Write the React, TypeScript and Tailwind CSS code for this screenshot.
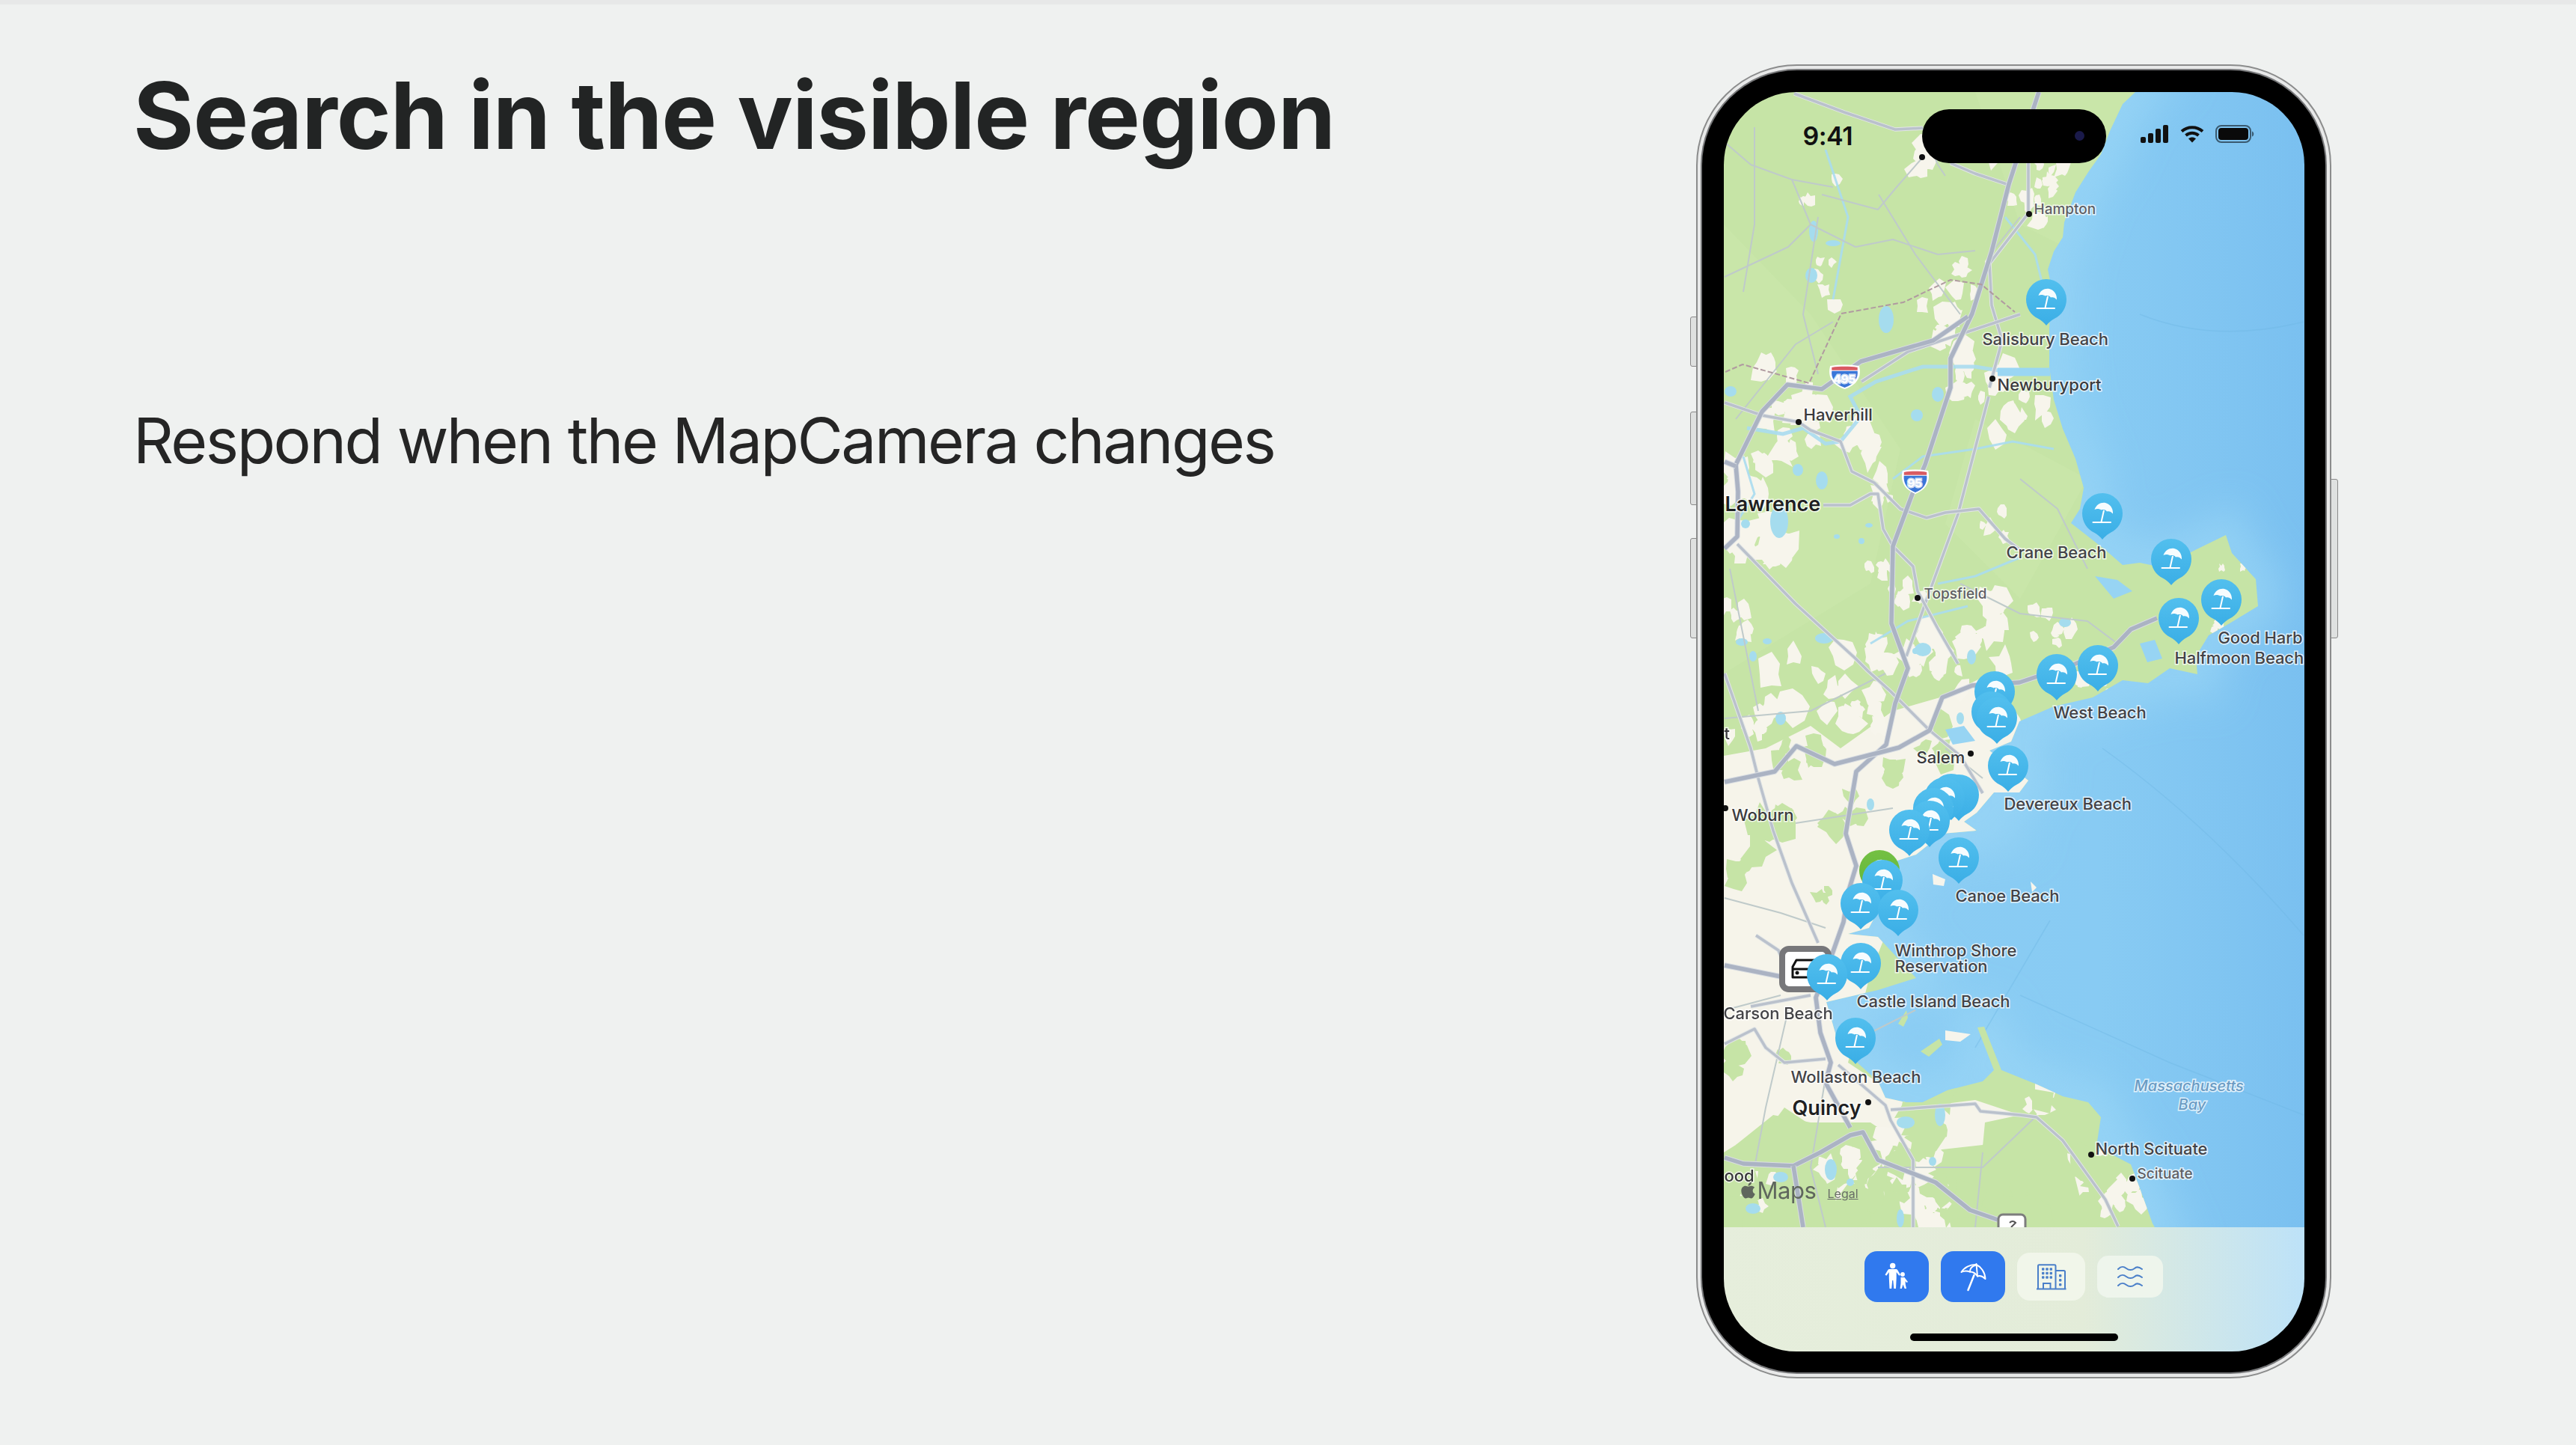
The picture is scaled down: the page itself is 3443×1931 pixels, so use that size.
import React from "react";
import { FaApple } from "react-icons/fa";

function rngFrom(seed: number) {
  let a = seed;
  return () => {
    a |= 0; a = (a + 0x6d2b79f5) | 0;
    let t = Math.imul(a ^ (a >>> 15), 1 | a);
    t = (t + Math.imul(t ^ (t >>> 7), 61 | t)) ^ t;
    return ((t ^ (t >>> 14)) >>> 0) / 4294967296;
  };
}

function blobs(clusters: number[][], seed: number) {
  const r = rngFrom(seed);
  let d = "";
  for (const [cx, cy, spread, count, size] of clusters) {
    for (let i = 0; i < count; i++) {
      const x = cx + (r() - 0.5) * 2 * spread;
      const y = cy + (r() - 0.5) * 2 * spread;
      const rad = size * (0.35 + r() * 0.5);
      const n = 7 + Math.floor(r() * 5);
      for (let k = 0; k < n; k++) {
        const an = (k / n) * Math.PI * 2;
        const rr = rad * (0.45 + r() * 0.75);
        d += `${k === 0 ? "M" : "L"}${(x + Math.cos(an) * rr).toFixed(0)} ${(y + Math.sin(an) * rr * 1.2).toFixed(0)}`;
      }
      d += "Z";
    }
  }
  return d;
}

const LAND =
  "M2854 123L2837 139L2820 175L2808 206L2791 230L2774 257L2759 297L2757 317L2745 336L2737 360L2742 384L2739 439L2739 490L2745 534L2757 573L2774 613L2785 652L2780 680L2768 699L2814 735L2837 755L2860 752L2889 758L2934 735L2975 715L2983 739L3015 774L3018 810L2980 833L2952 849L2935 877L2937 901L2900 893L2871 913L2837 909L2797 932L2745 944L2699 964L2688 991L2659 1003L2711 1043L2699 1059L2665 1059L2642 1086L2625 1098L2642 1110L2596 1114L2561 1142L2527 1153L2527 1185L2498 1240L2470 1248L2510 1252L2561 1307L2510 1323L2441 1339L2450 1370L2458 1398L2510 1445L2520 1467L2547 1473L2570 1473L2603 1457L2650 1445L2665 1430L2643 1373L2652 1372L2675 1430L2722 1449L2757 1465L2791 1473L2808 1493L2802 1532L2848 1556L2860 1588L2877 1635L2880 1640L2304 1640L2304 123Z";

const cream = blobs(
  [
    [2569, 205, 30, 6, 22], [2690, 200, 40, 10, 20], [2745, 230, 25, 8, 16], [2710, 290, 25, 6, 16],
    [2430, 260, 30, 3, 14], [2420, 370, 40, 5, 18], [2600, 420, 40, 10, 20], [2640, 370, 25, 5, 15],
    [2380, 510, 40, 8, 26], [2650, 500, 35, 12, 22], [2705, 560, 35, 7, 20], [2400, 570, 40, 9, 24],
    [2480, 590, 22, 6, 24], [2335, 640, 28, 9, 26], [2350, 730, 38, 10, 30], [2510, 650, 18, 5, 15],
    [2510, 760, 15, 5, 15], [2545, 795, 25, 6, 15], [2660, 825, 22, 5, 26], [2320, 830, 25, 6, 18],
    [2530, 870, 30, 7, 20], [2590, 880, 40, 10, 24], [2650, 860, 28, 5, 24], [2720, 835, 25, 4, 15],
    [2760, 850, 15, 4, 15], [2800, 915, 25, 7, 15], [2420, 930, 60, 10, 26], [2340, 960, 30, 7, 22],
    [2490, 950, 30, 7, 20], [2660, 700, 20, 4, 14], [2980, 770, 22, 4, 14], [2960, 838, 20, 4, 14],
    [2480, 1560, 45, 14, 24], [2570, 1590, 55, 14, 24], [2800, 1570, 30, 7, 18], [2720, 1470, 20, 5, 16],
    [2350, 1600, 30, 6, 18], [2835, 1600, 22, 7, 24],
  ],
  11,
);
const green = blobs(
  [
    [2370, 1115, 22, 5, 30], [2465, 1085, 22, 5, 28], [2330, 1160, 20, 4, 24], [2400, 1020, 30, 5, 26],
    [2530, 1040, 20, 4, 22], [2590, 990, 22, 4, 24], [2330, 1420, 20, 3, 28], [2380, 1400, 12, 2, 16],
    [2560, 1490, 40, 8, 30], [2500, 1590, 40, 9, 30], [2600, 1600, 30, 6, 30], [2340, 1610, 28, 6, 28],
    [2790, 1560, 20, 5, 30], [2430, 1200, 20, 3, 16], [2580, 1530, 20, 4, 24], [2700, 1610, 35, 7, 30],
  ],
  23,
);

const PONDS = [
  [2378, 697, 12, 22], [2435, 642, 8, 12], [2403, 628, 7, 8], [2562, 555, 8, 8], [2570, 868, 11, 9], [2635, 878, 6, 10],
  [2328, 858, 8, 5], [2438, 853, 12, 7], [2362, 857, 6, 4], [2343, 877, 5, 7], [2455, 717, 4, 3], [2488, 723, 4, 4],
  [2498, 702, 5, 3], [2313, 523, 8, 7], [2590, 527, 8, 10], [2424, 309, 6, 14], [2450, 325, 10, 4], [2421, 368, 8, 10],
  [2521, 427, 10, 18], [2380, 1573, 10, 7], [2447, 1563, 8, 14], [2473, 1580, 5, 5], [2343, 1615, 10, 7], [2583, 1552, 5, 6],
  [2540, 1628, 5, 12], [2593, 1490, 7, 15], [2547, 1500, 12, 8], [2760, 832, 8, 6], [2500, 1075, 5, 8], [2380, 960, 7, 9],
  [2333, 700, 6, 6], [2560, 870, 4, 4], [2645, 955, 6, 5], [2620, 960, 5, 8], [2565, 1180, 4, 4],
];

const MAJOR = [
  "M2725 123L2685 246L2662 336L2636 419L2607 479L2607 518L2573 621L2556 660L2530 730L2528 833L2550 893L2533 940L2521 995L2481 1031L2467 1114L2481 1157L2470 1193L2464 1232L2440 1300L2427 1333L2433 1380L2447 1420L2440 1447L2473 1507",
  "M2630 423L2584 455L2487 483L2435 520L2389 514L2355 550L2320 621L2323 657L2322 717L2305 733",
  "M2305 617L2320 623",
  "M2883 826L2848 841L2825 865L2774 887L2699 912L2636 916L2596 932L2579 976L2538 999L2452 1021L2401 997L2372 1031L2305 1045",
  "M2305 1547L2330 1555L2397 1558L2433 1540L2473 1517L2490 1513L2510 1550L2587 1580L2633 1617L2670 1630",
  "M2397 1558L2410 1640",
  "M2305 1290L2380 1305L2430 1310",
];
const MID = [
  "M2398 125L2465 150L2533 173L2570 171",
  "M2607 218L2640 232L2682 246",
  "M2322 727L2400 807L2480 880L2497 897L2527 924L2579 976",
  "M2658 530L2617 687L2573 807L2548 877",
  "M2659 518L2676 455L2662 408L2659 352L2711 285L2711 218L2725 175",
  "M2488 510L2550 470L2640 440L2700 420",
  "M2305 538L2355 555L2404 564L2420 575L2460 590L2475 630L2505 645L2520 660L2540 680L2575 692L2600 685L2645 680L2680 720L2700 735",
  "M2437 675L2473 675L2500 660L2510 660L2517 707L2530 730L2557 757L2563 790L2590 840L2617 887",
  "M2457 1423L2520 1477L2527 1497L2557 1550L2557 1640",
  "M2527 1483L2640 1475L2647 1485L2700 1490L2722 1493L2757 1524L2814 1603L2831 1639",
  "M2305 1395L2345 1375L2360 1400L2385 1420L2440 1415",
  "M2347 1250L2377 1270L2390 1300",
  "M2305 900L2340 1000L2350 1040L2370 1110L2395 1180L2430 1260",
  "M2420 1330L2340 1345",
  "M2579 976L2620 1010L2650 1060",
];
const MINOR = [
  "M2570 171L2590 220L2600 235",
  "M2305 190L2340 220L2395 240L2450 250",
  "M2395 240L2420 300L2480 330L2530 320L2590 340L2640 335",
  "M2570 210L2535 250L2510 280L2435 260",
  "M2511 260L2560 340L2620 420",
  "M2305 370L2390 330L2420 300",
  "M2430 290L2410 420L2430 500",
  "M2345 170L2345 300L2330 390",
  "M2660 340L2700 290",
  "M2320 560L2400 460L2450 430",
  "M2312 760L2350 950",
  "M2620 780L2700 820L2790 830L2830 860",
  "M2305 960L2420 950L2520 900",
  "M2700 640L2750 680L2790 760",
  "M2390 1350L2360 1480L2345 1560",
  "M2440 1440L2420 1560L2440 1640",
  "M2305 1350L2380 1330",
  "M2510 1560L2650 1560L2720 1493",
  "M2650 1540L2640 1640",
  "M2305 1200L2380 1220L2440 1240",
  "M2400 1100L2530 1080",
  "M2600 1000L2650 1040",
  "M2500 1380L2560 1350",
];
const RIVERS = [
  "M2335 572L2383 580L2410 572L2440 593L2460 590L2487 557L2473 530L2507 510L2570 490L2640 490L2690 498L2740 498",
  "M2330 610L2345 660L2320 700",
  "M2530 640L2570 610L2640 600L2690 590L2745 600",
  "M2590 780L2640 770L2700 745",
  "M2500 860L2550 830L2630 810",
  "M2440 200L2470 290L2450 400",
  "M2680 290L2720 340L2735 400",
];

const PINS: [number, number][] = [
  [2735, 435], [2810, 721], [2902, 782], [2969, 836], [2912, 861], [2804, 924], [2749, 936],
  [2666, 959], [2662, 986], [2669, 994], [2684, 1058], [2618, 1097], [2608, 1096], [2599, 1101], [2584, 1115],
  [2579, 1132], [2552, 1144], [2618, 1181], [2516, 1211], [2487, 1242], [2537, 1251], [2487, 1322], [2442, 1337], [2480, 1422],
];

const DOTS: [number, number][] = [
  [2569, 210], [2712, 286], [2663, 506], [2404, 564], [2563, 799], [2634, 1007], [2306, 1080], [2497, 1473], [2795, 1543], [2850, 1575],
];

const KIND: Record<string, string> = {
  beach: "text-[22px] font-medium text-[#434347] tracking-[-0.1px]",
  town: "text-[19px] font-medium text-[#5f6064]",
  city: "text-[22px] font-medium text-[#3a3a3d]",
  big: "text-[27px] font-semibold text-[#1f1f22]",
  bay: "text-[20px] font-medium italic text-[#6b9cc4] [-webkit-text-stroke:0px]",
  shield: "text-[15px] font-bold text-white [-webkit-text-stroke:0px]",
};

const LABELS: [string, number, number, string][] = [
  ["Hampton", 2719, 279, "town"],
  ["Salisbury Beach", 2650, 453, "beach"],
  ["Newburyport", 2670, 514, "city"],
  ["Haverhill", 2411, 554, "city"],
  ["Lawrence", 2306, 673, "big"],
  ["Crane Beach", 2682, 738, "beach"],
  ["Topsfield", 2572, 793, "town"],
  ["Good Harb", 2965, 852, "beach"],
  ["Halfmoon Beach", 2907, 879, "beach"],
  ["West Beach", 2745, 952, "beach"],
  ["t", 2305, 980, "city"],
  ["Salem", 2562, 1012, "city"],
  ["Devereux Beach", 2679, 1074, "beach"],
  ["Woburn", 2315, 1089, "city"],
  ["Canoe Beach", 2614, 1197, "beach"],
  ["Winthrop Shore", 2533, 1270, "beach"],
  ["Reservation", 2533, 1291, "beach"],
  ["Castle Island Beach", 2482, 1338, "beach"],
  ["Carson Beach", 2304, 1354, "beach"],
  ["Wollaston Beach", 2394, 1439, "beach"],
  ["Quincy", 2396, 1480, "big"],
  ["Massachusetts", 2853, 1451, "bay"],
  ["Bay", 2912, 1476, "bay"],
  ["North Scituate", 2801, 1535, "beach"],
  ["Scituate", 2857, 1568, "town"],
  ["ood", 2305, 1571, "city"],
  ["495", 2451, 506, "shield"],
  ["95", 2550, 645, "shield"],
];

function Pin({ x, y, fill = "url(#pin)" }: { x: number; y: number; fill?: string }) {
  return (
    <g transform={`translate(${x - 27} ${y - 62})`}>
      <path d="M27 62C24 58 20 55 16 52.700C6 48 0 38 0 27A27 27 0 1 1 54 27C54 38 48 48 38 52.700C34 55 30 58 27 62Z" fill={fill} />
      <path d="M16.500 22C19 15 25 12 31 13C37 14.500 41.500 20 41 27.500C38.500 24.500 35.500 23.500 33 24.500C31 22 28 21.500 25.500 22.500C23 21 20 20.500 16.500 22Z" fill="#fff" opacity="0.95" />
      <path d="M29 23L25.500 38.500" stroke="#fff" strokeWidth="2" fill="none" />
      <path d="M14.500 39H38" stroke="#fff" strokeWidth="2" strokeLinecap="round" fill="none" />
    </g>
  );
}

function Shield({ x, y, w, h }: { x: number; y: number; w: number; h: number }) {
  return (
    <g transform={`translate(${x} ${y}) scale(${w / 40} ${h / 34})`}>
      <path d="M2 2C14 0 26 0 38 2C41 14 38 27 20 34C2 27 -1 14 2 2Z" fill="#fff" />
      <path d="M4 9H36C37 18 33 27 20 32C7 27 3 18 4 9Z" fill="#3a76d8" />
      <path d="M4 4C14 2.500 26 2.500 36 4L36 8H4Z" fill="#d95a62" />
    </g>
  );
}

function Map() {
  return (
    <svg viewBox="2304 123 776 1517" width={776} height={1517} className="block">
      <defs>
        <linearGradient id="sea" x1="0" x2="1" y1="0" y2="0">
          <stop offset="0" stopColor="#8ccdf3" />
          <stop offset="0.65" stopColor="#88cbf3" />
          <stop offset="1" stopColor="#7ac0f0" />
        </linearGradient>
        <linearGradient id="pin" x1="0" x2="0" y1="0" y2="1">
          <stop offset="0" stopColor="#52bfee" />
          <stop offset="1" stopColor="#3aaee6" />
        </linearGradient>
        <linearGradient id="greenpin" x1="0" x2="0" y1="0" y2="1">
          <stop offset="0" stopColor="#74c043" />
          <stop offset="1" stopColor="#5fb53a" />
        </linearGradient>
        <filter id="soft" x="-20%" y="-20%" width="140%" height="140%">
          <feGaussianBlur stdDeviation="26" />
        </filter>
        <clipPath id="landclip">
          <path d={LAND} />
        </clipPath>
      </defs>

      <rect x="2304" y="123" width="776" height="1517" fill="url(#sea)" />
      <path d={LAND} fill="none" stroke="#9fd9f7" strokeWidth="60" filter="url(#soft)" opacity="0.6" />
      <path d="M2860 420Q2960 460 3079 430M2810 1000Q2950 1100 3079 1250M2740 1230L2640 1400M2700 1330L2900 1420L3079 1490" stroke="#6fb6e4" strokeWidth="1.500" fill="none" opacity="0.4" />
      <path d={LAND} fill="#c6e4a6" />

      <g clipPath="url(#landclip)">
        <path d="M2640 123L2854 123L2760 330L2700 300ZM2304 300L2420 420L2540 600L2500 780L2304 900Z M2640 560L2790 640L2700 800L2600 700Z" fill="#cdeab0" opacity="0.35" />
        <path
          d="M2304 1010L2360 1000L2420 970L2460 1000L2530 950L2600 930L2660 900L2700 960L2730 1060L2640 1110L2540 1200L2500 1300L2470 1420L2560 1480L2640 1470L2700 1490L2650 1530L2560 1540L2500 1500L2420 1500L2370 1490L2320 1530L2304 1540Z"
          fill="#f6f4ea"
        />
        <path d={cream} fill="#f7f5ec" />
        <path d="M2320 1530L2370 1500L2385 1480L2415 1500L2465 1505L2450 1540L2400 1556L2330 1558Z" fill="#c6e4a6" />
        <path d="M2653 1500L2700 1490L2740 1510L2770 1560L2790 1640L2640 1640Z" fill="#c6e4a6" />
        <path d="M2716 1455L2745 1460L2740 1488L2716 1482Z" fill="#c6e4a6" />
        <path d={green} fill="#c6e4a6" />
        {RIVERS.map((d, i) => (
          <path key={i} d={d} fill="none" stroke="#a8dcef" strokeWidth={i === 0 ? 5 : 3} opacity="0.9" />
        ))}
        <path d="M2670 497L2740 497" stroke="#9ad6f3" strokeWidth="11" />
        {PONDS.map(([x, y, a, b], i) => (
          <ellipse key={i} cx={x} cy={y} rx={a} ry={b} fill="#a5dcee" />
        ))}
        <path d="M2800 770L2830 775L2850 790L2825 800ZM2860 860L2880 855L2890 880L2870 885ZM2600 975L2625 970L2640 990L2610 995ZM2470 1265L2490 1290L2470 1300Z" fill="#97d4f3" />
      </g>

      <path d="M2600 1377L2634 1382L2620 1392L2600 1390ZM2583 1168L2600 1175L2598 1184L2584 1182ZM2714 1178L2722 1186L2716 1192Z" fill="#f7f5ec" />
      <path d="M2567 1405L2592 1388L2596 1396L2578 1412ZM2537 1368L2548 1350L2550 1360L2544 1372Z" fill="#c6e4a6" />

      {MINOR.map((d, i) => (
        <path key={i} d={d} fill="none" stroke="#bfcaca" strokeWidth="2" strokeLinejoin="round" />
      ))}
      {MID.map((d, i) => (
        <g key={i}>
          <path d={d} fill="none" stroke="#e2e6e6" strokeWidth="5.500" strokeLinejoin="round" />
          <path d={d} fill="none" stroke="#bac1cc" strokeWidth="3.500" strokeLinejoin="round" />
        </g>
      ))}
      {MAJOR.map((d, i) => (
        <g key={i}>
          <path d={d} fill="none" stroke="#d9dde2" strokeWidth="7.500" strokeLinejoin="round" />
          <path d={d} fill="none" stroke="#abb3c3" strokeWidth="5.500" strokeLinejoin="round" />
        </g>
      ))}
      <path
        d="M2306 497L2329 487L2418 512L2461 419L2544 404L2607 374L2648 380L2693 417"
        fill="none"
        stroke="#b09aa0"
        strokeWidth="2"
        strokeDasharray="7 3"
      />

      <Shield x={2444} y={487} w={43} h={33} />
      <Shield x={2541} y={627} w={38} h={33} />
      <rect x="2671" y="1623" width="36" height="30" rx="6" fill="#fff" stroke="#7d7d7d" strokeWidth="3" />
      <path d="M2686 1634Q2690 1630 2694 1634L2688 1640" fill="none" stroke="#555" strokeWidth="2" />

      {DOTS.map(([x, y], i) => (
        <circle key={i} cx={x} cy={y} r="4" fill="#111" />
      ))}

      <rect x="2382" y="1268" width="62" height="54" rx="9" fill="#fff" stroke="#77777a" strokeWidth="8" />
      <path d="M2396 1306V1292L2401 1283H2426V1306ZM2396 1295H2426" fill="none" stroke="#111" strokeWidth="3" strokeLinejoin="round" />
      <circle cx="2402" cy="1300" r="2.500" fill="#111" />

      <Pin x={2512} y={1198} fill="url(#greenpin)" />
      {PINS.map(([x, y], i) => (
        <Pin key={i} x={x} y={y} />
      ))}
    </svg>
  );
}

function FamilyIcon() {
  return (
    <svg viewBox="0 0 40 40" width={40} height={40} fill="#fff">
      <circle cx="14.700" cy="5.500" r="3.700" />
      <path d="M10.500 10H19C20 10 20.700 10.400 21.300 11.300L25 17.500L23.300 18.700L19.700 14V22L19 36H16.300L15.300 25H14.200L13.200 36H10.500L9.800 22V14L6.300 18.700L4.500 17.500L8.200 11.300C8.800 10.400 9.500 10 10.500 10Z" />
      <circle cx="28" cy="17" r="2.900" />
      <path d="M25.500 21H30.500L35 27L33.500 28L31.700 26V30L33 36H30.700L28.500 30.500L26.800 36H24.600L25.500 29V24Z" />
    </svg>
  );
}

function UmbrellaIcon() {
  return (
    <svg viewBox="0 0 40 40" width={40} height={40} fill="none" stroke="#fff" strokeWidth="2" strokeLinecap="round" strokeLinejoin="round">
      <path d="M4.500 14C8 8 16 3.500 24.500 4C31 7 36 14 36.500 23C33 19.500 29 18.500 26 19.500C24 16.500 20 13.500 16 13.500C12 12 8 12 4.500 14Z" />
      <path d="M24.500 3L26 19.500M24 4.500C18 6 16 10 16 13.500" />
      <path d="M21.500 18L13.500 38" strokeWidth="2.500" />
    </svg>
  );
}

function BuildingIcon() {
  const main = [10, 15.500, 21];
  return (
    <svg viewBox="0 0 40 40" width={40} height={40} fill="none" stroke="#4a7fc9" strokeWidth="2">
      <path d="M2 36.500V5.500C2 4.700 2.700 4.300 3.500 4.300H24C24.800 4.300 25.500 4.700 25.500 5.500V36.500M25.500 12H36.500C37.300 12 38 12.700 38 13.500V36.500M0 36.500H39.500" />
      <path d="M9 36.500V29H18.500V36.500" />
      {main.map((y) => (
        <g key={y} fill="#4a7fc9" stroke="none">
          <rect x="7" y={y - 1.700} width="3.400" height="3.400" rx="1" />
          <rect x="12.300" y={y - 1.700} width="3.400" height="3.400" rx="1" />
          <rect x="17.600" y={y - 1.700} width="3.400" height="3.400" rx="1" />
        </g>
      ))}
      <g fill="#4a7fc9" stroke="none">
        <rect x="30" y="17" width="3.400" height="3.400" rx="1" />
        <rect x="30" y="23" width="3.400" height="3.400" rx="1" />
        <rect x="30" y="29" width="3.400" height="3.400" rx="1" />
      </g>
    </svg>
  );
}

function WavesIcon() {
  return (
    <svg viewBox="0 0 36 30" width={36} height={30} fill="none" stroke="#4a7fc9" strokeWidth="2" strokeLinecap="round">
      {[4, 15, 26].map((y) => (
        <path key={y} d={`M2 ${y + 1}C6 ${y - 3} 9 ${y - 3} 13 ${y}C17 ${y + 3} 20 ${y + 3} 24 ${y}C27 ${y - 3} 30 ${y - 2} 34 ${y + 1}`} />
      ))}
    </svg>
  );
}

function StatusBar() {
  return (
    <>
      <div className="absolute left-[106px] top-[37px] text-[34px] leading-[44px] font-semibold text-[#111] tracking-[-0.5px]">9:41</div>
      <div className="absolute left-[265px] top-[23px] w-[246px] h-[72px] rounded-full bg-black flex items-center justify-end pr-[29px]">
        <div className="w-[13px] h-[13px] rounded-full bg-[#1a1a4a]" />
      </div>
      <div className="absolute left-[557px] top-[44px] flex items-center gap-[15px]">
        <svg viewBox="0 0 38 24" width={38} height={24} fill="#111">
          <rect x="0" y="16" width="7" height="8" rx="2" />
          <rect x="10" y="11" width="7" height="13" rx="2" />
          <rect x="20" y="5" width="7" height="19" rx="2" />
          <rect x="30" y="0" width="7" height="24" rx="2" />
        </svg>
        <svg viewBox="0 0 32 24" width={32} height={24} fill="none" stroke="#111" strokeWidth="4">
          <path d="M2 8.500C10 1.500 22 1.500 30 8.500" />
          <path d="M7.500 14C12.500 9.700 19.500 9.700 24.500 14" />
          <path d="M16 23.500L11 18.300C14 15.800 18 15.800 21 18.300Z" fill="#111" stroke="none" />
        </svg>
        <svg viewBox="0 0 54 24" width={54} height={24}>
          <rect x="1" y="1" width="46" height="22" rx="7" fill="none" stroke="#3a5a70" strokeWidth="2" />
          <rect x="4" y="4" width="40" height="16" rx="4" fill="#0a0a0a" />
          <path d="M49 8.500C52 9.500 52 14.500 49 15.500Z" fill="#3a5a70" />
        </svg>
      </div>
    </>
  );
}

function Phone() {
  return (
    <div className="relative w-[849px] h-[1756px] mt-[80px] mr-[327px]">
      <div className="absolute left-[-8px] top-[337px] w-[10px] h-[67px] bg-[#dfe1e0] border border-[#8a8a8a] rounded-l-[3px]" />
      <div className="absolute left-[-8px] top-[464px] w-[10px] h-[125px] bg-[#dfe1e0] border border-[#8a8a8a] rounded-l-[3px]" />
      <div className="absolute left-[-8px] top-[633px] w-[10px] h-[134px] bg-[#dfe1e0] border border-[#8a8a8a] rounded-l-[3px]" />
      <div className="absolute right-[-9px] top-[554px] w-[11px] h-[213px] bg-[#dfe1e0] border border-[#8a8a8a] rounded-r-[3px]" />
      <div className="relative w-full h-full rounded-[135px] bg-[#e8e9e9] border-2 border-[#8b8c8c] p-[6px]">
        <div className="w-full h-full rounded-[127px] bg-black ring-2 ring-[#77787a] p-[28.5px]">
          <div className="relative w-full h-full rounded-[97px] overflow-hidden flex flex-col">
            <div className="relative h-[1517px] shrink-0 overflow-hidden blur-[0.7px]">
              <Map />
              {LABELS.map(([t, x, y, k]) => (
                <div
                  key={t}
                  className={`absolute whitespace-nowrap leading-none -translate-y-1/2 [paint-order:stroke_fill] [-webkit-text-stroke:3px_rgba(255,255,255,0.75)] ${KIND[k]}`}
                  style={{ left: x - 2304, top: y - 123 }}
                >
                  {t}
                </div>
              ))}
              <div className="absolute left-[20px] top-[1452px] flex items-center text-[#5f665d]">
                <FaApple size={25} />
                <span className="text-[31px] leading-none tracking-[-0.5px]">Maps</span>
              </div>
              <div className="absolute left-[139px] top-[1464px] text-[16px] leading-none underline text-[#6a6f68]">Legal</div>
              <StatusBar />
            </div>
            <div className="relative flex-1 bg-[linear-gradient(90deg,#e6eedc_0%,#e3ecd9_62%,#bde2f8_100%)] pt-[32px] flex justify-center items-start gap-[16px]">
              <button className="w-[86px] h-[68px] rounded-[17px] bg-[#3079ee] flex items-center justify-center">
                <FamilyIcon />
              </button>
              <button className="w-[86px] h-[68px] rounded-[17px] bg-[#3079ee] flex items-center justify-center">
                <UmbrellaIcon />
              </button>
              <button className="w-[91px] h-[64px] mt-[2px] rounded-[17px] bg-[#f1f6ea] flex items-center justify-center">
                <BuildingIcon />
              </button>
              <button className="w-[88px] h-[56px] mt-[6px] rounded-[15px] bg-[#eef5ec] flex items-center justify-center">
                <WavesIcon />
              </button>
              <div className="absolute left-1/2 -translate-x-1/2 bottom-[14px] w-[278px] h-[10px] rounded-full bg-black" />
            </div>
          </div>
        </div>
      </div>
    </div>
  );
}

export default function App() {
  return (
    <div className="w-[3443px] h-[1931px] overflow-hidden bg-[#eff1f0] border-t-[6px] border-[#e7e8e8] flex justify-between items-start [font-family:Inter,'Noto_Sans',sans-serif]">
      <div className="pl-[178px]">
        <h1 className="mt-[73px] text-[124px] leading-[150px] font-bold tracking-[-1px] text-[#222424] whitespace-nowrap">Search in the visible region</h1>
        <p className="mt-[310px] text-[84px] leading-[100px] tracking-[-2.5px] text-[#252525] whitespace-nowrap">Respond when the MapCamera changes</p>
      </div>
      <Phone />
    </div>
  );
}
